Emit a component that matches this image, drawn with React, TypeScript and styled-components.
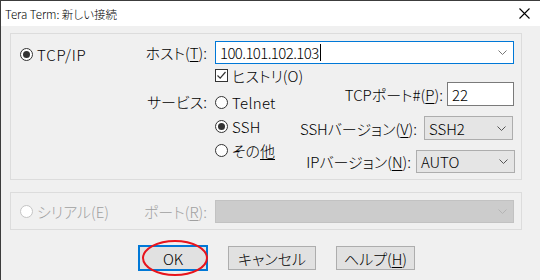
import React from 'react';
import styled, { createGlobalStyle } from 'styled-components';

const GlobalStyle = createGlobalStyle`
	html, body {
		margin: 0;
		padding: 0;
		background: #f0f0f0;
	}
`;

const Window = styled.div`
	position: relative;
	width: 540px;
	height: 280px;
	box-sizing: border-box;
	overflow: hidden;
	border-top: 1px solid #3c3c3c;
	border-left: 1px solid #3c3c3c;
	background: #f0f0f0;
	color: #000;
	font-family: 'Noto Sans CJK JP', 'Noto Sans', sans-serif;
	font-feature-settings: 'palt';
	font-weight: 300;
	font-size: 15px;
`;

const TitleBar = styled.div`
	height: 25px;
	display: flex;
	align-items: center;
	justify-content: space-between;
	padding: 0 10px 0 4px;
	background: #fff;
	font-size: 11.5px;
`;

const Body = styled.div`
	padding: 7px 0 0 9px;
`;

const Group = styled.div<{ $height: number; $top?: number }>`
	box-sizing: border-box;
	width: 512px;
	height: ${({ $height }) => `${$height}px`};
	margin-top: ${({ $top }) => `${$top || 0}px`};
	padding: 7px 7px 0 9px;
	border: 1px solid #dcdcdc;
	display: grid;
	grid-template-columns: 112px 67px 299px;
	grid-template-rows: 23px auto;
	column-gap: 8px;
	align-items: start;
`;

const Option = styled.div<{ $disabled?: boolean; $height?: number; $shift?: number }>`
	display: flex;
	align-items: center;
	gap: 4px;
	height: ${({ $height }) => `${$height || 24}px`};
	margin-top: ${({ $shift }) => `${$shift || 0}px`};
	color: ${({ $disabled }) => ($disabled ? '#a0a0a0' : '#000')};
	white-space: nowrap;
`;

const OptionText = styled.span<{ $wide?: boolean }>`
	letter-spacing: ${({ $wide }) => ($wide ? '0.8px' : '0.3px')};
`;

const RadioDot = styled.span<{ $checked?: boolean; $disabled?: boolean }>`
	flex: none;
	width: 13px;
	height: 13px;
	box-sizing: border-box;
	border-radius: 50%;
	border: 1px solid ${({ $disabled }) => ($disabled ? '#c4c4c4' : '#333')};
	background: #fff;
	display: flex;
	align-items: center;
	justify-content: center;

	&::after {
		content: '';
		display: ${({ $checked }) => ($checked ? 'block' : 'none')};
		width: 7px;
		height: 7px;
		border-radius: 50%;
		background: #333;
	}
`;

const CheckBox = styled.span`
	flex: none;
	width: 13px;
	height: 13px;
	box-sizing: border-box;
	border: 1px solid #333;
	background: #fff;
	display: flex;
	align-items: center;
	justify-content: center;
`;

const Label = styled.div<{ $disabled?: boolean; $top?: number }>`
	height: 23px;
	margin-top: ${({ $top }) => `${$top || 0}px`};
	display: flex;
	align-items: center;
	justify-content: flex-end;
	white-space: nowrap;
	color: ${({ $disabled }) => ($disabled ? '#a0a0a0' : '#000')};
`;

const U = styled.span`
	text-decoration: underline;
	text-underline-offset: 2px;
`;

const Field = styled.div<{ $width: number; $height?: number; $tone: 'edit' | 'combo' | 'select' | 'off'; $shift?: number }>`
	box-sizing: border-box;
	width: ${({ $width }) => `${$width}px`};
	height: ${({ $height }) => `${$height || 24}px`};
	margin-right: ${({ $shift }) => `${$shift || 0}px`};
	display: flex;
	align-items: center;
	padding: 0 6px 0 4px;
	border: 1px solid
		${({ $tone }) => ({ edit: '#7a7a7a', combo: '#0078d7', select: '#adadad', off: '#c2c2c2' })[$tone]};
	background: ${({ $tone }) => ({ edit: '#fff', combo: '#fff', select: '#e5e5e5', off: '#cccccc' })[$tone]};
`;

const FieldText = styled.span<{ $tight?: boolean }>`
	flex: 1;
	display: flex;
	align-items: center;
	white-space: nowrap;
	letter-spacing: ${({ $tight }) => ($tight ? '-0.6px' : '0')};
`;

const Caret = styled.span`
	width: 1px;
	height: 17px;
	margin-left: 1px;
	background: #000;
`;

const Services = styled.div`
	display: flex;
	flex-direction: column;
`;

const CheckRow = styled(Option)`
	margin-top: 4px;
	height: 14px;
`;

const ServicesBody = styled.div`
	display: flex;
	justify-content: space-between;
`;

const RadioStack = styled.div`
	margin-top: 8px;
	display: flex;
	flex-direction: column;
`;

const SettingStack = styled.div`
	display: flex;
	flex-direction: column;
	align-items: flex-end;
	gap: 10px;
`;

const SettingRow = styled.div<{ $gap: number }>`
	display: flex;
	align-items: center;
	gap: ${({ $gap }) => `${$gap}px`};
	white-space: nowrap;
`;

const ButtonRow = styled.div`
	display: flex;
	align-items: center;
	gap: 20px;
	margin-top: 15px;
	padding-left: 128px;
`;

const Button = styled.div<{ $width: number; $default?: boolean }>`
	position: relative;
	box-sizing: border-box;
	width: ${({ $width }) => `${$width}px`};
	height: ${({ $default }) => ($default ? '26px' : '24px')};
	display: flex;
	align-items: center;
	justify-content: center;
	border: ${({ $default }) => ($default ? '2px solid #0078d7' : '1px solid #adadad')};
	background: #e1e1e1;
	white-space: nowrap;
`;

const Highlight = styled.div`
	position: absolute;
	left: 2px;
	top: -7px;
	width: 66px;
	height: 36px;
	box-sizing: border-box;
	border: 2px solid #e8141c;
	border-radius: 50%;
	pointer-events: none;
`;

const Chevron: React.FC<{ color: string }> = ({ color }) => (
	<svg width='9' height='5' viewBox='0 0 9 5'>
		<polyline points='0.5,0.5 4.5,4.5 8.5,0.5' fill='none' stroke={color} strokeWidth='1' />
	</svg>
);

const App: React.FC = () => {
	return (
		<>
			<GlobalStyle />
			<Window>
				<TitleBar>
					<span>Tera Term: 新しい接続</span>
					<svg width='11' height='11' viewBox='0 0 11 11'>
						<path d='M0.5 0.5 L10.5 10.5 M10.5 0.5 L0.5 10.5' stroke='#000' strokeWidth='1.1' />
					</svg>
				</TitleBar>

				<Body>
					<Group $height={147}>
						<Option $height={23} $shift={2}>
							<RadioDot $checked />
							<OptionText $wide>TCP/IP</OptionText>
						</Option>
						<Label>
							ホスト(<U>T</U>):
						</Label>
						<Field $width={299} $height={23} $tone='combo'>
							<FieldText $tight>
								100.101.102.103
								<Caret />
							</FieldText>
							<Chevron color='#777' />
						</Field>

						<div />
						<Label $top={26}>サービス:</Label>
						<Services>
							<CheckRow>
								<CheckBox>
									<svg width='11' height='11' viewBox='0 0 11 11'>
										<polyline points='1.5,5.5 4.2,8.2 9.5,2' fill='none' stroke='#333' strokeWidth='1.2' />
									</svg>
								</CheckBox>
								ヒストリ(O)
							</CheckRow>
							<ServicesBody>
								<RadioStack>
									<Option>
										<RadioDot />
										<OptionText>Telnet</OptionText>
									</Option>
									<Option>
										<RadioDot $checked />
										<OptionText>SSH</OptionText>
									</Option>
									<Option>
										<RadioDot />
										<span>
											その<U>他</U>
										</span>
									</Option>
								</RadioStack>
								<SettingStack>
									<SettingRow $gap={4}>
										<span>
											TCPポート#(<U>P</U>):
										</span>
										<Field $width={67} $tone='edit'>
											<FieldText>22</FieldText>
										</Field>
									</SettingRow>
									<SettingRow $gap={7}>
										<span>
											SSHバージョン(<U>V</U>):
										</span>
										<Field $width={89} $tone='select' $shift={1}>
											<FieldText>SSH2</FieldText>
											<Chevron color='#555' />
										</Field>
									</SettingRow>
									<SettingRow $gap={5}>
										<span>
											IPバージョン(<U>N</U>):
										</span>
										<Field $width={99} $height={23} $tone='select' $shift={-1}>
											<FieldText>AUTO</FieldText>
											<Chevron color='#555' />
										</Field>
									</SettingRow>
								</SettingStack>
							</ServicesBody>
						</Services>
					</Group>

					<Group $height={38} $top={12}>
						<Option $height={23} $disabled>
							<RadioDot $disabled />
							シリアル(E)
						</Option>
						<Label $disabled>
							ポート(<U>R</U>):
						</Label>
						<Field $width={299} $height={23} $tone='off'>
							<FieldText />
							<Chevron color='#b4b4b4' />
						</Field>
					</Group>

					<ButtonRow>
						<Button $width={70} $default>
							OK
							<Highlight />
						</Button>
						<Button $width={88}>キャンセル</Button>
						<Button $width={79}>
							ヘルプ(<U>H</U>)
						</Button>
					</ButtonRow>
				</Body>
			</Window>
		</>
	);
};

export default App;
